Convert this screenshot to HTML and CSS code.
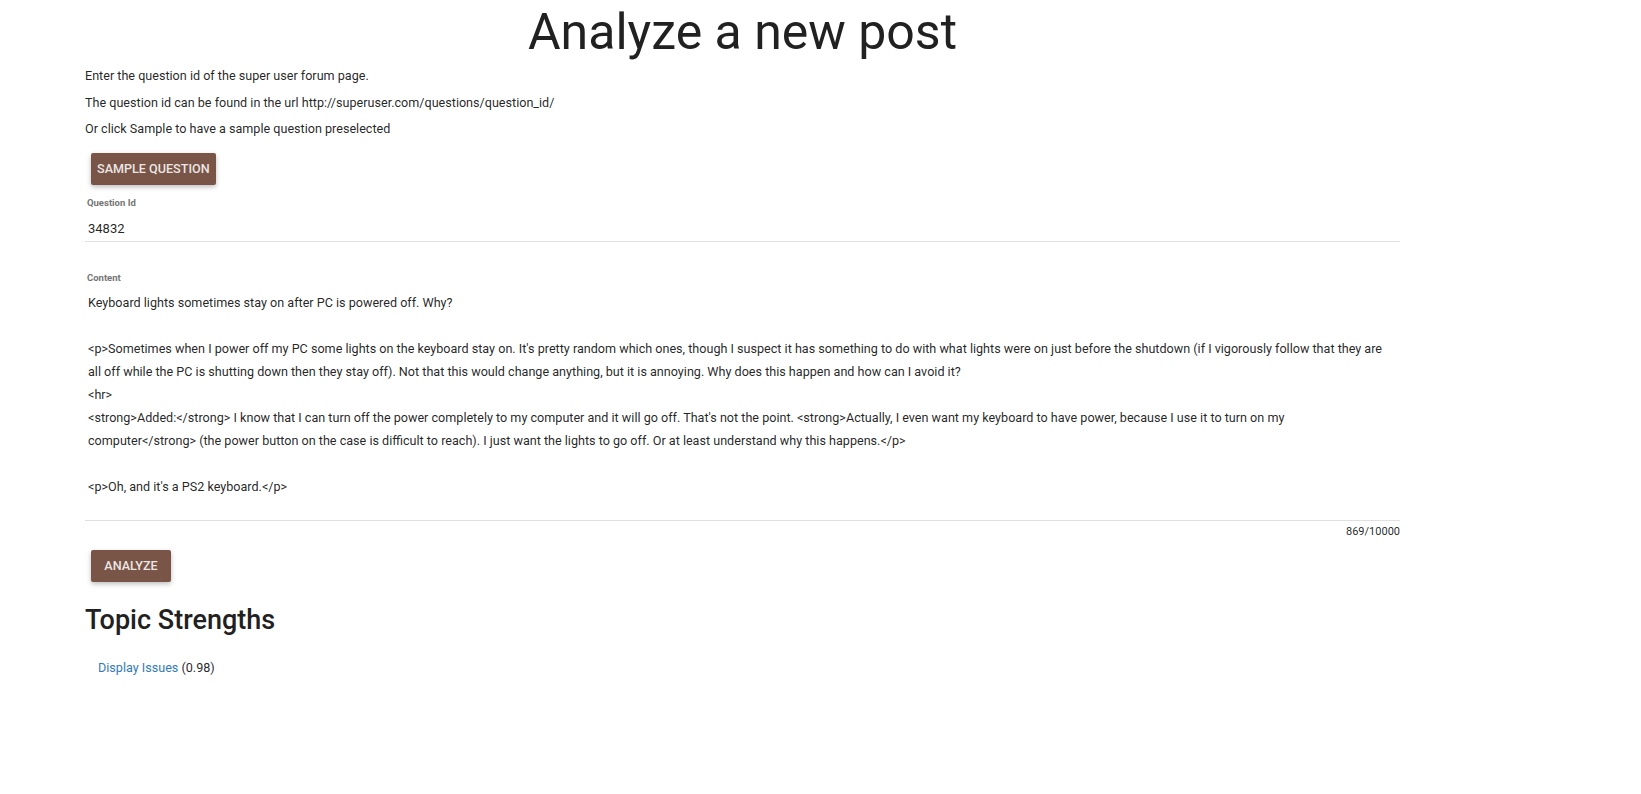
FILE: index.html
```html
<!DOCTYPE html>
<html>
<head>
<meta charset="utf-8">
<title>Analyze a new post</title>
<link rel="stylesheet" href="styles.css">
</head>
<body>
<div class="page">
  <h1 class="title">Analyze a new post</h1>
  <p class="info">Enter the question id of the super user forum page.</p>
  <p class="info">The question id can be found in the url http://superuser.com/questions/question_id/</p>
  <p class="info">Or click Sample to have a sample question preselected</p>
  <button class="btn">Sample Question</button>
  <div class="field field-id">
    <label class="field-label">Question Id</label>
    <input class="field-input" type="text" value="34832">
  </div>
  <div class="field field-content">
    <label class="field-label">Content</label>
    <textarea class="field-textarea" readonly>Keyboard lights sometimes stay on after PC is powered off. Why?

&lt;p&gt;Sometimes when I power off my PC some lights on the keyboard stay on. It's pretty random which ones, though I suspect it has something to do with what lights were on just before the shutdown (if I vigorously follow that they are all off while the PC is shutting down then they stay off). Not that this would change anything, but it is annoying. Why does this happen and how can I avoid it?
&lt;hr&gt;
&lt;strong&gt;Added:&lt;/strong&gt; I know that I can turn off the power completely to my computer and it will go off. That's not the point. &lt;strong&gt;Actually, I even want my keyboard to have power, because I use it to turn on my computer&lt;/strong&gt; (the power button on the case is difficult to reach). I just want the lights to go off. Or at least understand why this happens.&lt;/p&gt;

&lt;p&gt;Oh, and it's a PS2 keyboard.&lt;/p&gt;</textarea>
    <div class="counter">869/10000</div>
  </div>
  <button class="btn btn-analyze">Analyze</button>
  <h2 class="section-title">Topic Strengths</h2>
  <ul class="topics">
    <li><a class="topic-link" href="#">Display Issues</a> (0.98)</li>
  </ul>
</div>
</body>
</html>
```

FILE: styles.css
```css
html, body {
  margin: 0;
  padding: 0;
  background: #fff;
}
body {
  font-family: Roboto, "Noto Sans", sans-serif;
  font-size: 12.6px;
  color: rgba(0, 0, 0, 0.87);
}
.page {
  margin-left: 85px;
  width: 1315px;
  display: flex;
  flex-direction: column;
  align-items: flex-start;
}
.title {
  align-self: stretch;
  text-align: center;
  font-size: 50px;
  font-weight: 400;
  line-height: 54px;
  margin: 5px 0 8px;
  color: #212121;
}
.info {
  margin: 0 0 8px;
  line-height: 18.57px;
}
.btn {
  margin: 6px;
  height: 32px;
  min-width: 80px;
  padding: 0 6px;
  background: #795548;
  color: rgba(255, 255, 255, 0.87);
  border: none;
  border-radius: 2px;
  font-family: Roboto, sans-serif;
  font-size: 12.6px;
  font-weight: 500;
  text-transform: uppercase;
  box-shadow: 0 2px 5px 0 rgba(0, 0, 0, 0.26);
  cursor: pointer;
}
.btn-analyze {
  margin-top: 11px;
}
.field {
  align-self: stretch;
  display: flex;
  flex-direction: column;
}
.field-id {
  padding-top: 6px;
}
.field-content {
  margin-top: 30px;
}
.field-label {
  font-size: 9.5px;
  line-height: 12px;
  font-weight: 700;
  color: #757575;
  padding-left: 2px;
  margin-bottom: 7px;
}
.field-input {
  height: 26px;
  box-sizing: border-box;
  border: none;
  border-bottom: 1px solid #e0e0e0;
  padding: 0 3px;
  font-family: Roboto, sans-serif;
  font-size: 13px;
  color: rgba(0, 0, 0, 0.87);
  outline: none;
}
.field-textarea {
  height: 230px;
  box-sizing: border-box;
  border: none;
  border-bottom: 1px solid #e0e0e0;
  padding: 0 12px 0 3px;
  font-family: Roboto, sans-serif;
  font-size: 12.6px;
  line-height: 23px;
  color: rgba(0, 0, 0, 0.87);
  resize: none;
  overflow: hidden;
  outline: none;
}
.counter {
  align-self: flex-end;
  font-size: 11px;
  line-height: 14px;
  margin-top: 4px;
  color: rgba(0, 0, 0, 0.87);
}
.section-title {
  font-size: 27px;
  font-weight: 500;
  line-height: 30px;
  margin: 17px 0 0;
  color: #212121;
}
.topics {
  list-style: none;
  margin: 24px 0 0;
  padding: 0 0 0 13px;
  line-height: 18px;
}
.topic-link {
  color: #337ab7;
  text-decoration: none;
}
```
